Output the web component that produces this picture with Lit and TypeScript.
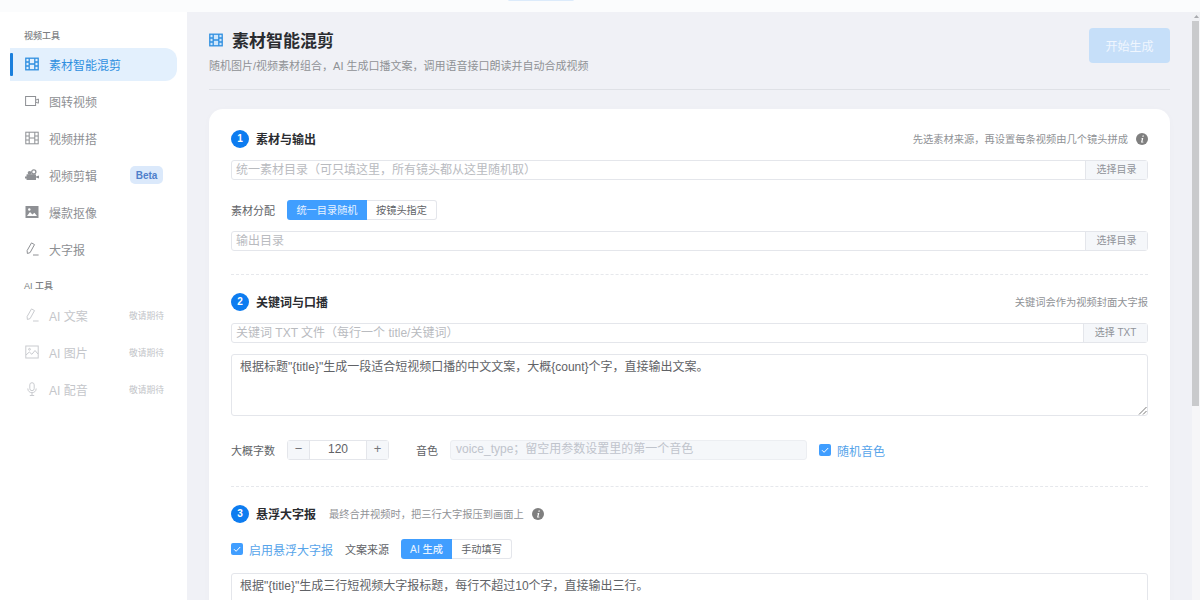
import { LitElement, html, css, svg } from "lit";
import { customElement } from "lit/decorators.js";

const film = (c: string, fill = "none", sw = 1.2) => svg`<svg viewBox="0 0 14 14" width="14" height="14" fill="${fill}" stroke="${c}" stroke-width="${sw}"><rect x="0.800" y="1.200" width="12.400" height="11.600"/><path d="M4.200 1.200v11.600M9.800 1.200v11.600M0.800 5h3.400M0.800 9h3.400M9.800 5h3.400M9.800 9h3.400M4.200 7h5.600" fill="none"/></svg>`;
const ICONS: Record<string, any> = {
  film: (c: string, a: boolean) => film(c, "none", a ? 1.3 : 1),
  video: (c: string) => svg`<svg viewBox="0 0 14 14" width="14" height="14" fill="none" stroke="${c}" stroke-width="1"><rect x="0.600" y="2.500" width="10" height="9"/><path d="M11 6l2.400-1v4.200L11 8.200"/></svg>`,
  cam: (c: string) => svg`<svg viewBox="0 0 14 14" width="14" height="14"><circle cx="4.600" cy="4.800" r="1.900" fill="${c}"/><circle cx="8.800" cy="3.900" r="2.100" fill="none" stroke="${c}" stroke-width="1.300"/><rect x="1.500" y="6.200" width="9.500" height="5.800" rx=".6" fill="${c}"/><path d="M0 8.500h2v2H0zM11 8.500l3-1v3l-3-1z" fill="${c}"/></svg>`,
  image: (c: string) => svg`<svg viewBox="0 0 14 14" width="14" height="14"><rect x="0.500" y="1" width="13" height="12" fill="${c}"/><path d="M2 11l3-4 2.400 2.400 2-1.600 2.600 3.200z" fill="#fff"/><circle cx="4.300" cy="4.500" r="1.200" fill="#fff"/></svg>`,
  pen: (c: string) => svg`<svg viewBox="0 0 14 14" width="14" height="14" fill="none" stroke="${c}" stroke-width="1"><path d="M6.500.9l3 1.700-4.400 8-2.700.9-.3-2.900zM8 13h5.600"/></svg>`,
  pic: (c: string) => svg`<svg viewBox="0 0 14 14" width="14" height="14" fill="none" stroke="${c}" stroke-width="1"><rect x="0.800" y="1" width="12.400" height="12"/><path d="M1 10l3.300-3 2.600 2.300L10 5.500l3 3.500"/><circle cx="4.500" cy="4.300" r=".9"/></svg>`,
  mic: (c: string) => svg`<svg viewBox="0 0 14 14" width="14" height="14" fill="none" stroke="${c}" stroke-width="1"><rect x="4.800" y="0.700" width="4.400" height="8" rx="2.200"/><path d="M2.800 6.500c0 5.600 8.400 5.600 8.400 0M7 10.800V13.500M4.800 13.500h4.400"/></svg>`,
};

const info = html`<svg class="info" viewBox="0 0 12 12" width="12" height="12"><circle cx="6" cy="6" r="6" fill="#7f7f7f"/><path d="M6.600 2.400h1.300l-.3 1.300H6.300zM6 5h1.300l-.9 3.800h1v.8H5l.9-3.800H5z" fill="#fff"/></svg>`;
const check = html`<svg class="cb" viewBox="0 0 12 12" width="12" height="12"><rect width="12" height="12" rx="2" fill="#409eff"/><path d="M3 6.200l2.100 2.100L9.200 4" fill="none" stroke="#fff" stroke-width="1"/></svg>`;

@customElement("app-root")
export class AppRoot extends LitElement {
  static styles = css`
    :host { display: block; width: 1200px; height: 600px; overflow: hidden; background: #fbfcfd;
      font-family: "Liberation Sans", "Noto Sans CJK SC", sans-serif; color: #606266; }
    * { box-sizing: border-box; }
    .topbar { height: 12px; position: relative; }
    .tab { position: absolute; left: 508px; top: -2px; width: 66px; height: 3px; background: #dcebfb; border-radius: 3px; }
    .shell { display: flex; height: 588px; }
    .side { width: 187px; flex: none; background: #fff; padding-top: 18px; }
    .group { font-size: 9px; font-weight: 500; line-height: 12px; color: #7d7f83; padding-left: 24px; height: 13px; }
    .ai { margin-top: 14px; margin-bottom: 6px; }
    .items { display: flex; flex-direction: column; gap: 4px; margin: 5px 10px 0; width: 167px; }
    .item { height: 33px; display: flex; align-items: center; padding-left: 15px; padding-bottom: 1px; gap: 10px; font-size: 12px; color: #8e9094; border-radius: 0 12px 12px 0; position: relative; }
    .item.active { background: #e3f0fd; color: #2f8fe0; }
    .item.active::before { content: ""; position: absolute; left: 0; top: 5px; width: 3px; height: 23px; background: #1a7fdc; border-radius: 1px; }
    .item svg { flex: none; display: block; }
    .item.off { color: #c4c6ca; }
    .badge { margin-left: auto; margin-right: 14px; font: 700 10px "Liberation Sans", sans-serif; color: #4f7fcb; background: #dbe9fb; border-radius: 5px; height: 18px; width: 33px; display: flex; align-items: center; justify-content: center; }
    .soon { margin-left: auto; margin-right: 13px; font-size: 8.750px; color: #c2c4c8; }
    .main { flex: 1; background: #f0f1f6; padding: 0 21px 0 22px; overflow: hidden; }
    .col { width: 961px; }
    .head { height: 78px; display: flex; justify-content: space-between; border-bottom: 1px solid #dfe1e6; padding-top: 16px; }
    .headl { margin-top: 1px; }
    .title { display: flex; align-items: center; gap: 9px; font-size: 17px; font-weight: 700; color: #2a2c30; line-height: 26px; }
    .title svg { display: block; margin-bottom: 4px; }
    .sub { font-size: 11px; color: #8f9195; line-height: 15px; margin-top: 4px; }
    .start { width: 81px; height: 35px; background: #c6dff9; color: #f0f6fe; font-size: 12px; border-radius: 4px; display: flex; align-items: center; justify-content: center; }
    .card { margin-top: 19px; background: #fff; border-radius: 14px; padding: 21px 22px 0; height: 540px; box-shadow: 0 1px 8px rgba(0,0,0,.02); }
    .sec { display: flex; align-items: center; height: 18px; }
    .sec.next { margin-top: 18px; }
    .num { width: 18px; height: 18px; border-radius: 50%; background: #0d7cf0; color: #fff; font: 700 10px/18px "Liberation Sans", sans-serif; text-align: center; flex: none; }
    .sec b { font-size: 12px; font-weight: 700; color: #2a2c30; margin-left: 7px; padding-bottom: 2px; }
    .hint { font-size: 10.250px; color: #909296; padding-bottom: 2px; }
    .hint.near { margin-left: 13px; }
    .right { margin-left: auto; }
    .info { flex: none; margin-left: 8px; display: block; }
    .input { height: 20px; margin-top: 12px; border: 1px solid #e4e6eb; border-radius: 3px; display: flex; font-size: 12px; line-height: 18px; color: #b9bbbf; }
    .input.tight { margin-top: 11px; }
    .input .ph { flex: 1; padding-left: 4px; }
    .input .btn { width: 62px; background: #f5f7fa; border-left: 1px solid #e4e6eb; font-size: 10px; color: #909399; text-align: center; }
    .input .btn.wide { width: 64px; }
    .row { display: flex; align-items: center; font-size: 11px; color: #606266; }
    .row.r1 { margin-top: 20px; }
    .row.r2 { margin-top: 24px; }
    .row.r3 { margin-top: 16px; }
    .lab { width: 56px; flex: none; }
    .seg { display: flex; height: 20px; font-size: 10.200px; border-radius: 3px; }
    .seg span { display: flex; align-items: center; justify-content: center; padding-bottom: 2px; }
    .seg .on { background: #409eff; color: #e9f3ff; border-radius: 3px 0 0 3px; }
    .seg .offb { border: 1px solid #e4e6eb; border-left: 0; border-radius: 0 3px 3px 0; color: #606266; }
    .w80 { width: 80px; } .w70 { width: 70px; } .w51 { width: 51px; font-weight: 500; } .w60 { width: 60px; }
    .dash { border-top: 1px dashed #e6e8ec; }
    .d1 { margin-top: 23px; }
    .d2 { margin-top: 26px; }
    .ta { border: 1px solid #e4e6eb; border-radius: 3px; padding: 0 8px; height: 62px; font-size: 12px; line-height: 25px; color: #606266; position: relative; margin-top: 11px; }
    .ta.t2 { margin-top: 14px; }
    .grip { position: absolute; right: 0; bottom: 0; display: block; }
    .stepper { width: 102px; height: 20px; border: 1px solid #e4e6eb; border-radius: 3px; display: flex; font-size: 12px; color: #606266; line-height: 16px; }
    .stepper i { width: 21px; background: #f5f7fa; font-style: normal; text-align: center; color: #74767a; font-size: 13px; }
    .stepper span { flex: 1; text-align: center; border-left: 1px solid #e4e6eb; border-right: 1px solid #e4e6eb; }
    .vlab { margin-left: 27px; }
    .voice { width: 357px; height: 20px; background: #f5f7fa; border: 1px solid #eceef2; border-radius: 3px; font-size: 12px; line-height: 16px; color: #c0c4cc; padding-left: 5px; margin-left: 12px; }
    .chk { display: flex; align-items: center; }
    .chk.gap { margin-left: 12px; }
    .lab.gap { margin-left: 12px; }
    .cb { display: block; flex: none; }
    .lnk { color: #56a4ea; font-size: 12px; margin-left: 6px; }
    .scroll { width: 8px; flex: none; background: #f6f6f8; display: flex; flex-direction: column; align-items: stretch; }
    .arrow { height: 9px; flex: none; display: flex; justify-content: center; align-items: center; background: #f0f1f4; }
    .arrow svg { display: block; }
    .thumb { height: 385px; background: #c9cacc; flex: none; margin-right: 1px; }
  `;

  item(icon: string, label: string, extra: any = "", cls = "") {
    const c = cls === "active" ? "#2f8fe0" : cls === "off" ? "#c9cbcf" : "#8e9094";
    return html`<div class="item ${cls}">${ICONS[icon](c, cls === "active")}<span>${label}</span>${extra}</div>`;
  }

  render() {
    const soon = html`<span class="soon">敬请期待</span>`;
    return html`
      <div class="topbar"><div class="tab"></div></div>
      <div class="shell">
        <aside class="side">
          <div class="group">视频工具</div>
          <div class="items">
            ${this.item("film", "素材智能混剪", "", "active")}
            ${this.item("video", "图转视频")}
            ${this.item("film", "视频拼搭")}
            ${this.item("cam", "视频剪辑", html`<span class="badge">Beta</span>`)}
            ${this.item("image", "爆款抠像")}
            ${this.item("pen", "大字报")}
          </div>
          <div class="group ai">AI 工具</div>
          <div class="items">
            ${this.item("pen", "AI 文案", soon, "off")}
            ${this.item("pic", "AI 图片", soon, "off")}
            ${this.item("mic", "AI 配音", soon, "off")}
          </div>
        </aside>
        <main class="main">
          <div class="col">
            <div class="head">
              <div class="headl">
                <div class="title">${film("#2f8fe0", "#cfe6fb", 1.3)}<span>素材智能混剪</span></div>
                <div class="sub">随机图片/视频素材组合，AI 生成口播文案，调用语音接口朗读并自动合成视频</div>
              </div>
              <div class="start">开始生成</div>
            </div>
            <div class="card">
              <div class="sec"><span class="num">1</span><b>素材与输出</b><span class="hint right">先选素材来源，再设置每条视频由几个镜头拼成</span>${info}</div>
              <div class="input"><span class="ph">统一素材目录（可只填这里，所有镜头都从这里随机取）</span><span class="btn">选择目录</span></div>
              <div class="row r1"><span class="lab">素材分配</span><div class="seg"><span class="on w80">统一目录随机</span><span class="offb w70">按镜头指定</span></div></div>
              <div class="input tight"><span class="ph">输出目录</span><span class="btn">选择目录</span></div>
              <div class="dash d1"></div>
              <div class="sec next"><span class="num">2</span><b>关键词与口播</b><span class="hint right">关键词会作为视频封面大字报</span></div>
              <div class="input"><span class="ph">关键词 TXT 文件（每行一个 title/关键词）</span><span class="btn wide">选择 TXT</span></div>
              <div class="ta">根据标题"{title}"生成一段适合短视频口播的中文文案，大概{count}个字，直接输出文案。
                <svg class="grip" width="9" height="9" viewBox="0 0 9 9" fill="none" stroke="#555" stroke-width=".8"><path d="M1 8.500L8.500 1M5 8.500L8.500 5"/></svg></div>
              <div class="row r2"><span class="lab">大概字数</span><div class="stepper"><i>−</i><span>120</span><i>+</i></div><span class="vlab">音色</span><div class="voice">voice_type；留空用参数设置里的第一个音色</div><span class="chk gap">${check}<span class="lnk">随机音色</span></span></div>
              <div class="dash d2"></div>
              <div class="sec next"><span class="num">3</span><b>悬浮大字报</b><span class="hint near">最终合并视频时，把三行大字报压到画面上</span>${info}</div>
              <div class="row r3">${check}<span class="lnk">启用悬浮大字报</span><span class="lab gap">文案来源</span><div class="seg"><span class="on w51">AI 生成</span><span class="offb w60">手动填写</span></div></div>
              <div class="ta t2">根据"{title}"生成三行短视频大字报标题，每行不超过10个字，直接输出三行。</div>
            </div>
          </div>
        </main>
        <div class="scroll"><div class="arrow"><svg width="5" height="3" viewBox="0 0 5 3"><path d="M2.500 0L5 3H0z" fill="#a9abaf"/></svg></div><div class="thumb"></div></div>
      </div>`;
  }
}
